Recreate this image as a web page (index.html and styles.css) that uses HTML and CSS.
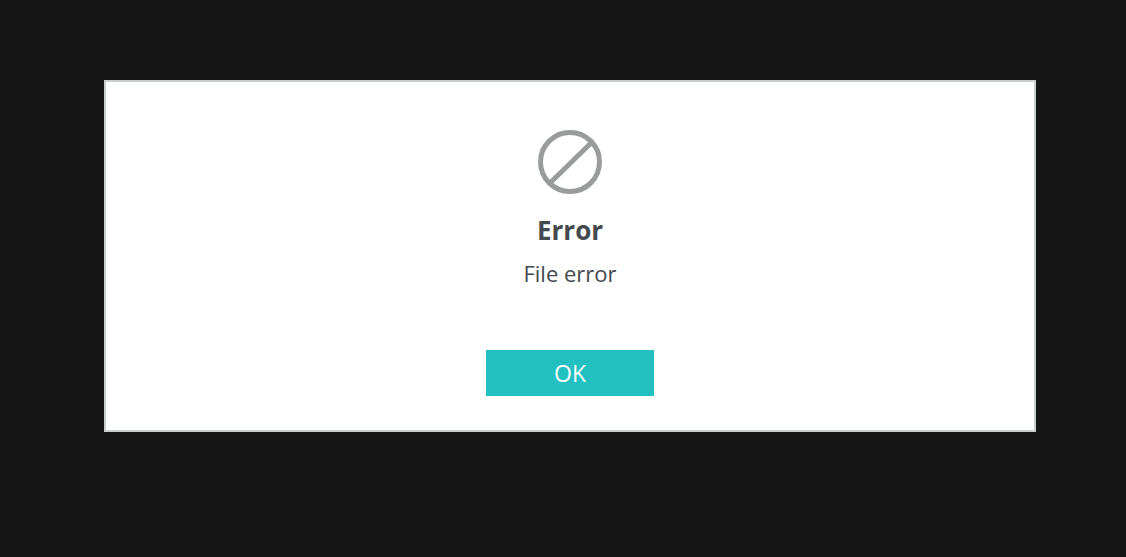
FILE: index.html
```html
<!DOCTYPE html>
<html lang="en">
<head>
    <meta charset="UTF-8">
    <meta name="viewport" content="width=device-width, initial-scale=1.0">
    <title>Error</title>
    <link rel="stylesheet" href="styles.css">
</head>
<body>
    <div class="dialog" role="alertdialog" aria-labelledby="title" aria-describedby="message">
        <svg class="icon" viewBox="0 0 64 64" aria-hidden="true">
            <circle cx="32" cy="32" r="29.5"/>
            <path d="M12 53L53 13"/>
        </svg>
        <h1 class="title" id="title">Error</h1>
        <p class="message" id="message">File error</p>
        <button class="ok" type="button">OK</button>
    </div>
</body>
</html>
```
FILE: styles.css
```css
body {
    margin: 0;
    padding: 80px 90px 0 104px;
    background-color: #161616;
    color: #44494e;
    font-family: "Open Sans", sans-serif;
}

.dialog {
    display: flex;
    flex-direction: column;
    align-items: center;
    padding: 48px 24px 34px;
    border: 2px solid #c8cecc;
    background-color: #fff;
    text-align: center;
}

.icon {
    width: 64px;
    height: 64px;
    fill: none;
    stroke: #999b9c;
    stroke-width: 5;
}

.title {
    margin: 18px 0 0;
    font-size: 26px;
    line-height: 36px;
    font-weight: 700;
}

.message {
    margin: 9px 0 0;
    font-size: 22px;
    line-height: 32px;
}

.ok {
    width: 168px;
    height: 46px;
    margin-top: 61px;
    padding: 0;
    border: none;
    background-color: #22c0c0;
    color: #fff;
    font-family: inherit;
    font-size: 23px;
    cursor: pointer;
}

.ok:hover {
    background-color: #1eadad;
}
```
